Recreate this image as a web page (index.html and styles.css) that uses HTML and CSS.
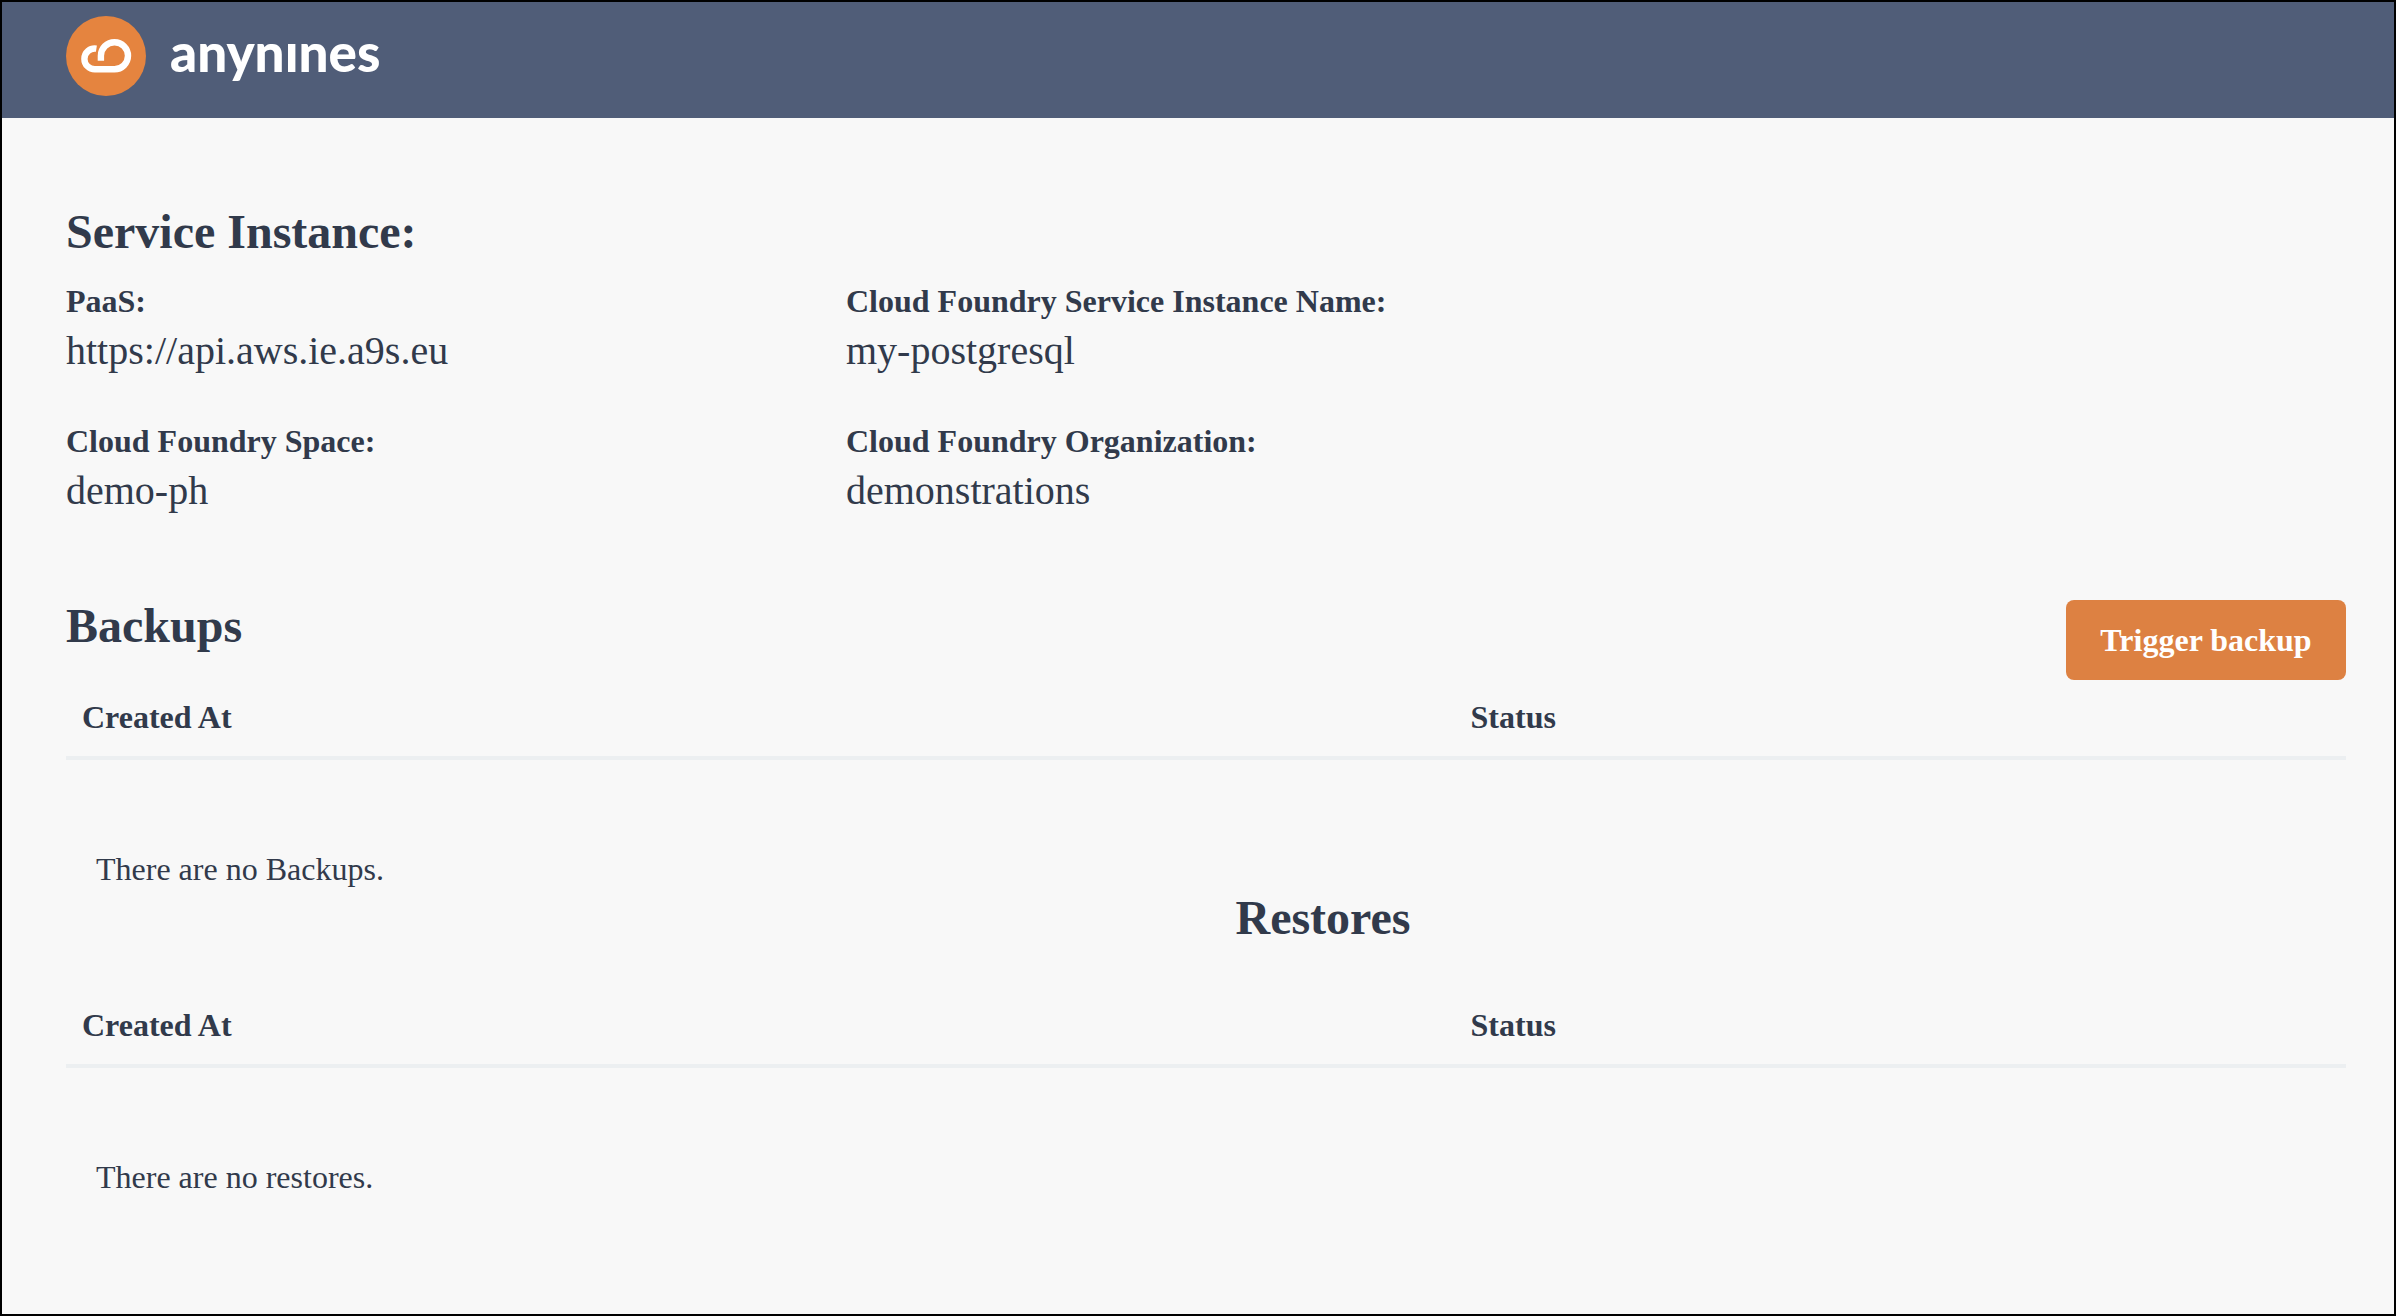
FILE: index.html
```html
<!DOCTYPE html>
<html lang="en">
<head>
  <meta charset="utf-8">
  <title>anynines – Service Instance</title>
  <link rel="stylesheet" href="styles.css">
</head>
<body class="page">
  <header class="topbar">
    <a class="brand" href="#">
      <svg class="brand-icon" viewBox="0 0 80 80" aria-hidden="true">
        <circle cx="40" cy="40" r="40" fill="#e5843f"/>
        <path d="M30.4 32.6A10.4 10.4 0 0 0 18.4 42.9A10.4 10.4 0 0 0 29 53.3H48.4A13.55 13.55 0 1 0 34.9 39.7V44.7" fill="none" stroke="#fff" stroke-width="6.4"/>
      </svg>
      <span class="brand-name">anynınes</span>
    </a>
  </header>

  <main class="content">
    <section>
      <h1 class="title">Service Instance:</h1>
      <dl class="details">
        <div>
          <dt class="label">PaaS:</dt>
          <dd class="value">https://api.aws.ie.a9s.eu</dd>
        </div>
        <div>
          <dt class="label">Cloud Foundry Service Instance Name:</dt>
          <dd class="value">my-postgresql</dd>
        </div>
        <div>
          <dt class="label">Cloud Foundry Space:</dt>
          <dd class="value">demo-ph</dd>
        </div>
        <div>
          <dt class="label">Cloud Foundry Organization:</dt>
          <dd class="value">demonstrations</dd>
        </div>
      </dl>
    </section>

    <section>
      <div class="section-head">
        <h2 class="title">Backups</h2>
        <button class="button" type="button">Trigger backup</button>
      </div>
      <table class="table">
        <thead>
          <tr><th class="col-created" scope="col">Created At</th><th scope="col">Status</th></tr>
        </thead>
      </table>
      <p class="empty">There are no Backups.</p>
    </section>

    <section>
      <h2 class="title title-restores">Restores</h2>
      <table class="table">
        <thead>
          <tr><th class="col-created" scope="col">Created At</th><th scope="col">Status</th></tr>
        </thead>
      </table>
      <p class="empty">There are no restores.</p>
    </section>
  </main>
</body>
</html>
```

FILE: styles.css
```css
* {
  box-sizing: border-box;
}

.page {
  min-height: 100vh;
  margin: 0;
  border: 2px solid #000;
  background: #f8f8f8;
  color: #313a4b;
  font-family: "Liberation Serif", "Times New Roman", serif;
  font-size: 32px;
}

.topbar {
  display: flex;
  padding: 14px 64px 22px;
  background: #505d78;
}

.brand {
  display: flex;
  gap: 24px;
  height: 80px;
  color: #fff;
  text-decoration: none;
}

.brand-icon {
  width: 80px;
  height: 80px;
}

.brand-name {
  font-family: Lato, sans-serif;
  font-size: 53px;
  font-weight: 900;
  line-height: 72px;
}

.content {
  padding: 88px 48px 0 64px;
}

.title {
  margin: 0;
  font-size: 48px;
  font-weight: bold;
  line-height: 52px;
}

.details {
  display: grid;
  grid-template-columns: 780px 1fr;
  row-gap: 40px;
  margin: 19px 0 83px;
}

.label {
  font-weight: bold;
  line-height: 48px;
}

.value {
  margin: 0;
  font-size: 40px;
  line-height: 52px;
}

.section-head {
  display: flex;
  justify-content: space-between;
  align-items: flex-start;
}

.button {
  min-width: 280px;
  height: 80px;
  padding: 0 32px;
  border: 0;
  border-radius: 8px;
  background: #dd8142;
  color: #fff;
  font: bold 32px "Liberation Serif", "Times New Roman", serif;
}

.table {
  width: 100%;
  border-collapse: separate;
  border-spacing: 0;
  table-layout: fixed;
}

.table th {
  padding: 18px 16px 20px;
  border-bottom: 4px solid #eceff1;
  line-height: 38px;
  text-align: left;
}

.table .col-created {
  width: 60.9%;
}

.empty {
  margin: 0;
  padding: 86px 30px 0;
  line-height: 46px;
}

.title-restores {
  margin-bottom: 44px;
  padding-left: 234px;
  text-align: center;
}
```
